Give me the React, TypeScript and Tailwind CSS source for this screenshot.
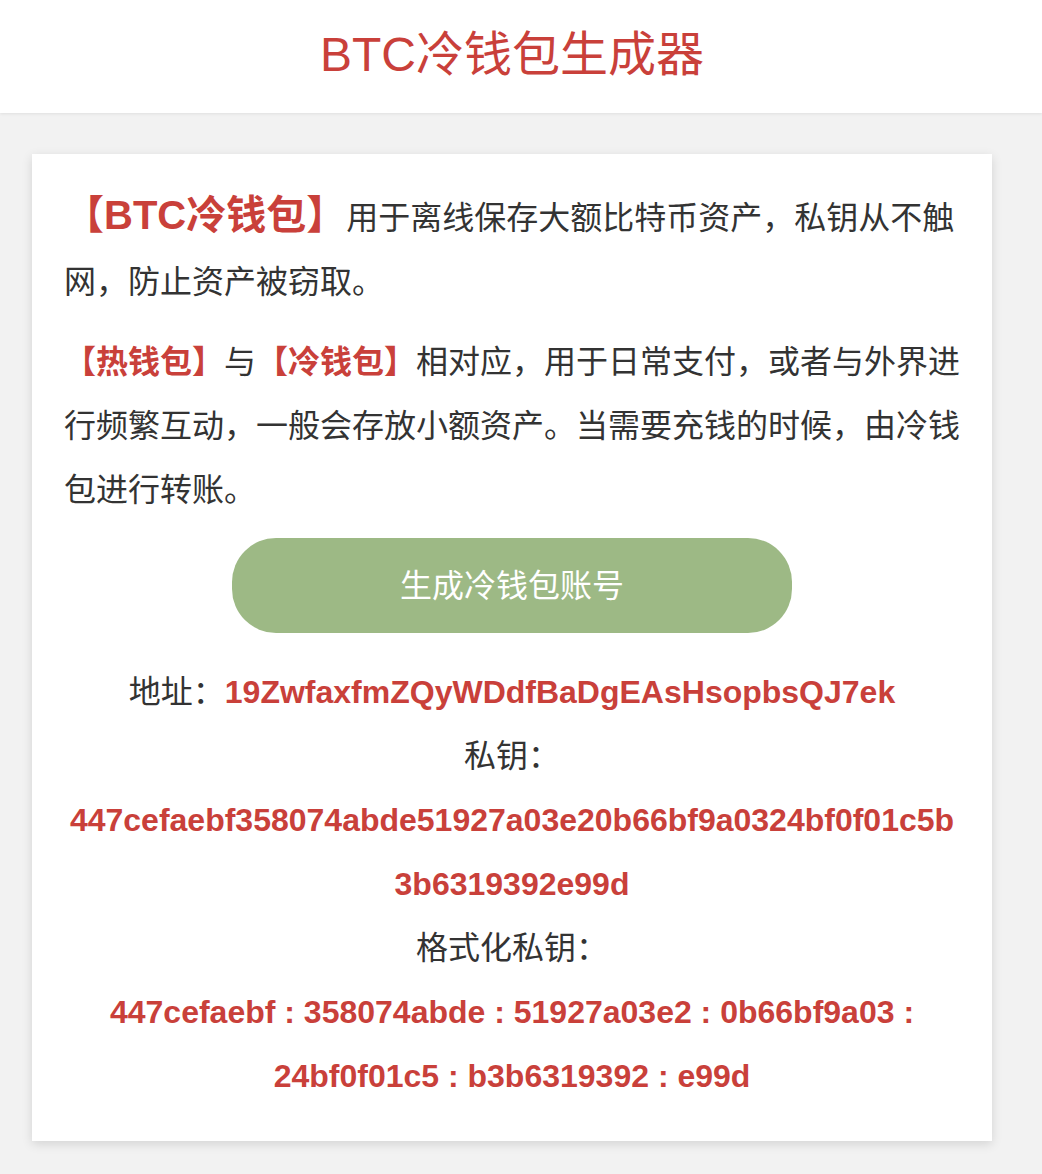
import React from 'react';

const address = '19ZwfaxfmZQyWDdfBaDgEAsHsopbsQJ7ek';
const privateKey = '447cefaebf358074abde51927a03e20b66bf9a0324bf0f01c5b3b6319392e99d';

// split the key into groups of 10 for the formatted view
const formatKey = (key: string) => key.match(/.{1,10}/g)?.join(' : ') ?? key;

const App: React.FC = () => {
  return (
    <div className="min-h-screen bg-[#f2f2f2] pb-[34px] text-[#333] font-['Liberation_Sans','Noto_Sans_CJK_SC',sans-serif]">
      <header className="h-[113px] bg-white shadow-[0_1px_3px_rgba(0,0,0,0.08)]">
        <div className="w-[1024px] h-full flex items-center justify-center">
          <h1 className="text-[48px] leading-none text-[#c9403a] pb-1">BTC冷钱包生成器</h1>
        </div>
      </header>

      <div className="w-[1024px] px-[32px] pt-[41px]">
        <main className="bg-white pl-[32px] pr-[30px] pt-[32px] pb-[33px] shadow-[0_3px_10px_rgba(0,0,0,0.13)]">
          <p className="text-[32px] leading-[64px]">
            <span className="text-[40px] font-bold text-[#c9403a] leading-[40px]">【BTC冷钱包】</span>
            用于离线保存大额比特币资产，私钥从不触网，防止资产被窃取。
          </p>
          <p className="mt-4 text-[32px] leading-[64px]">
            <span className="font-bold text-[#c9403a]">【热钱包】</span>与
            <span className="font-bold text-[#c9403a]">【冷钱包】</span>
            相对应，用于日常支付，或者与外界进行频繁互动，一般会存放小额资产。当需要充钱的时候，由冷钱包进行转账。
          </p>

          <div className="flex justify-center mt-4 mb-[27px] mr-[2px]">
            <button className="w-[560px] h-[95px] rounded-[44px] bg-[#9db985] text-white text-[32px]">
              生成冷钱包账号
            </button>
          </div>

          <div className="text-center text-[32px] leading-[64px] mr-[2px]">
            <div>
              地址：<span className="font-bold text-[#c9403a]">{address}</span>
            </div>
            <div>私钥：</div>
            <div className="font-bold text-[#c9403a] break-all">{privateKey}</div>
            <div>格式化私钥：</div>
            <div className="font-bold text-[#c9403a]">{formatKey(privateKey)}</div>
          </div>
        </main>
      </div>
    </div>
  );
};

export default App;
